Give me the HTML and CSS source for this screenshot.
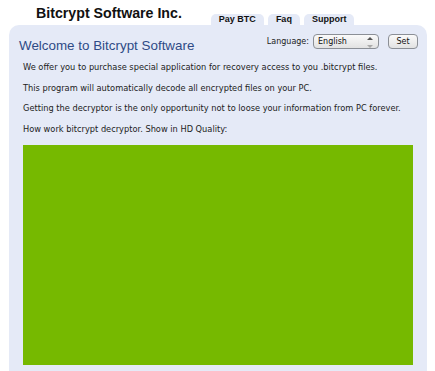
FILE: index.html
```html
<!DOCTYPE html>
<html lang="en">
<head>
  <meta charset="UTF-8">
  <title>Bitcrypt Software</title>
  <link rel="stylesheet" href="styles.css">
</head>
<body>
  <div class="header">
    <div class="logo">Bitcrypt Software Inc.</div>
    <ul class="tabs">
      <li>Pay BTC</li>
      <li>Faq</li>
      <li>Support</li>
    </ul>
  </div>

  <div class="panel">
    <div class="panel-top">
      <h1>Welcome to Bitcrypt Software</h1>
      <form class="lang">
        <label for="lang">Language:</label>
        <div class="select-wrap">
          <select id="lang">
            <option>English</option>
          </select>
          <svg class="arrows" width="8" height="12" viewBox="0 0 8 12">
            <path d="M1 4 L4 1 L7 4 Z" fill="#555"/>
            <path d="M1 9 L4 12 L7 9 Z" fill="#aaa"/>
          </svg>
        </div>
        <button type="button">Set</button>
      </form>
    </div>

    <p>We offer you to purchase special application for recovery access to you .bitcrypt files.</p>
    <p>This program will automatically decode all encrypted files on your PC.</p>
    <p>Getting the decryptor is the only opportunity not to loose your information from PC forever.</p>
    <p>How work bitcrypt decryptor. Show in HD Quality:</p>

    <div class="video"></div>
  </div>
</body>
</html>
```

FILE: styles.css
```css
body {
  margin: 0;
  padding: 0 8px 0 9px;
  background: #fff;
  font-family: "DejaVu Sans", Verdana, sans-serif;
  color: #222;
}

.header {
  display: flex;
  align-items: flex-end;
  height: 25px;
}

.logo {
  font-family: "Liberation Sans", Arial, sans-serif;
  font-weight: bold;
  font-size: 14.2px;
  color: #111;
  margin-left: 27px;
  align-self: flex-start;
  padding-top: 5px;
}

.tabs {
  list-style: none;
  margin: 0 0 0 29px;
  padding: 0;
  display: flex;
  gap: 4px;
}

.tabs li {
  background: #e5eaf7;
  border-radius: 5px 5px 0 0;
  font-family: "Liberation Sans", Arial, sans-serif;
  font-weight: bold;
  font-size: 9px;
  line-height: 11px;
  padding: 0 8px;
  color: #111;
}

.panel {
  background: #e5eaf7;
  border-radius: 10px 10px 0 0;
  padding: 8px 14px 7px 14px;
}

.panel-top {
  display: flex;
  justify-content: space-between;
  align-items: flex-start;
  margin-left: -4px;
  margin-right: -5px;
}

h1 {
  margin: 5px 0 0;
  font-family: "Liberation Sans", Arial, sans-serif;
  font-weight: normal;
  font-size: 13.4px;
  color: #2f4a86;
}

.lang {
  display: flex;
  align-items: center;
  font-size: 8px;
  margin-top: 1px;
}

.lang label {
  margin-right: 4px;
}

.select-wrap {
  position: relative;
}

.lang select {
  appearance: none;
  width: 66px;
  height: 15px;
  padding: 0 0 0 4px;
  border: 1px solid #8b8f96;
  border-radius: 4px;
  background: linear-gradient(#fafafa, #e2e2e2);
  font-family: "DejaVu Sans", Verdana, sans-serif;
  font-size: 8px;
  color: #111;
}

.arrows {
  position: absolute;
  right: 5px;
  top: 2px;
}

.lang button {
  margin-left: 9px;
  width: 30px;
  height: 15px;
  padding: 0;
  border: 1px solid #8b8f96;
  border-radius: 4px;
  background: linear-gradient(#fafafa, #e2e2e2);
  font-family: "DejaVu Sans", Verdana, sans-serif;
  font-size: 8px;
  color: #111;
}

p {
  margin: 10.5px 0 0;
  font-size: 8.25px;
  line-height: 10px;
}

p:first-of-type {
  margin-top: 9px;
}

.video {
  margin-top: 11px;
  height: 220px;
  background: #76b900;
}
```
